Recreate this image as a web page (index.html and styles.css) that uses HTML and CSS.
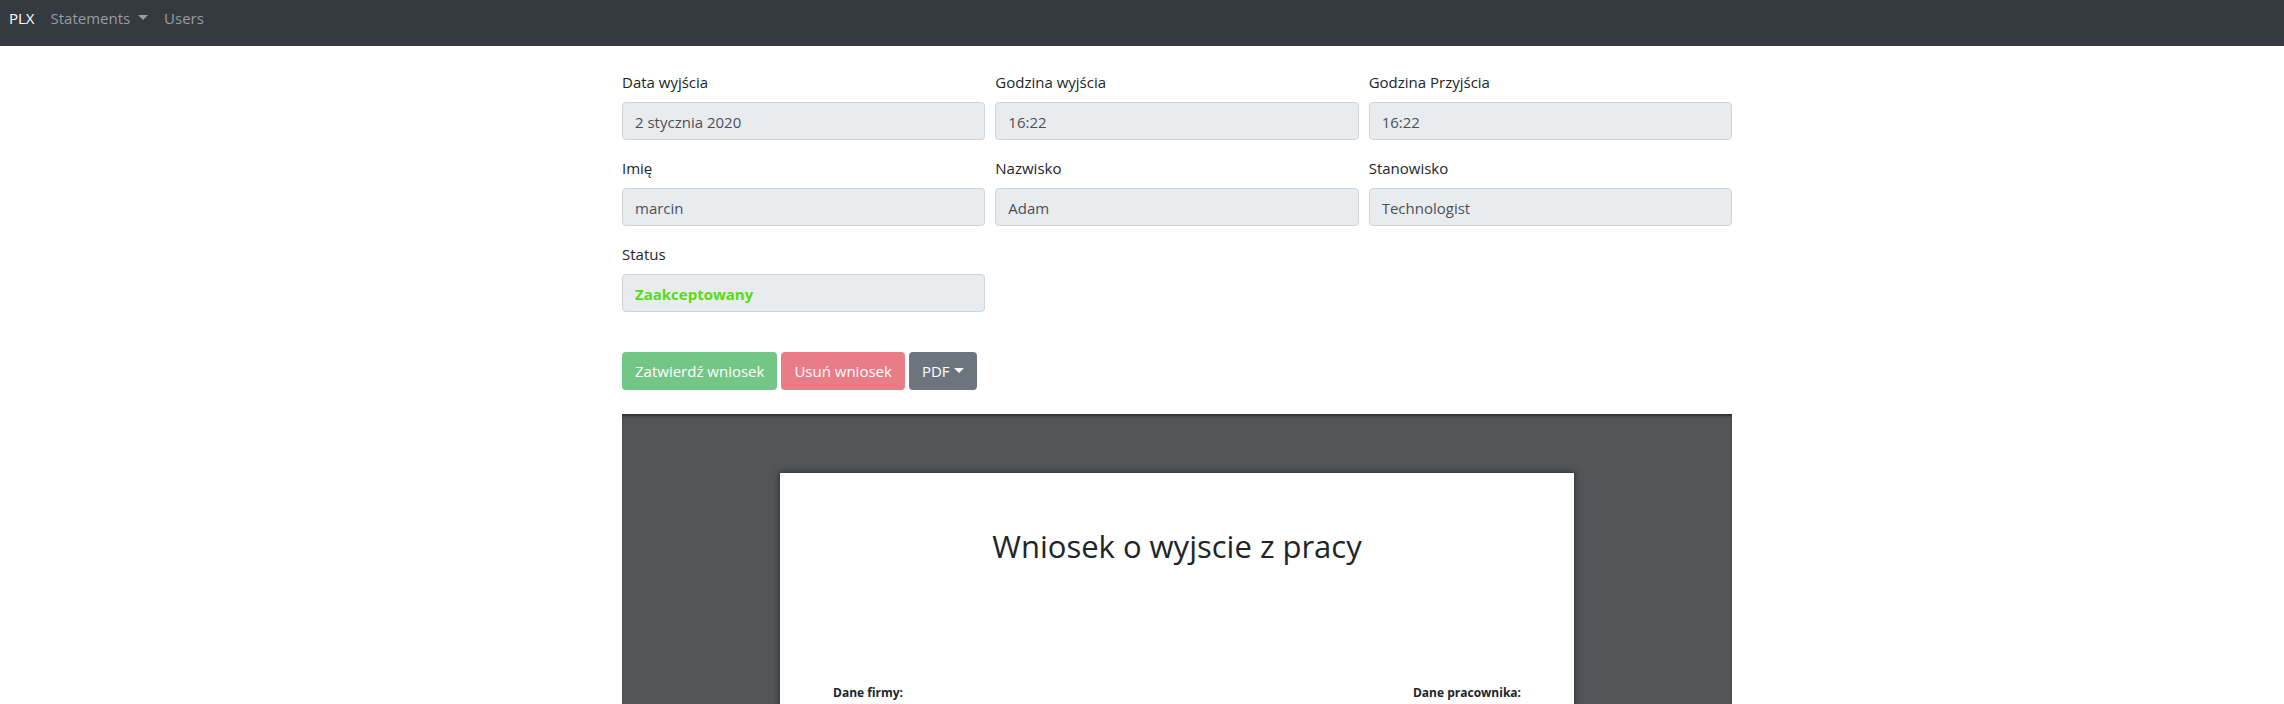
FILE: index.html
```html
<!DOCTYPE html>
<html lang="pl">
<head>
<meta charset="utf-8">
<meta name="viewport" content="width=device-width, initial-scale=1">
<title>PLX</title>
<link rel="stylesheet" href="styles.css">
</head>
<body>
<nav class="navbar">
  <a class="nav-link active" href="#">PLX</a>
  <a class="nav-link" href="#">Statements <span class="caret nav-caret"></span></a>
  <a class="nav-link" href="#">Users</a>
</nav>
<main class="content">
  <div class="container">
    <form class="fields">
      <div class="field">
        <label for="date">Data wyjścia</label>
        <input id="date" type="text" value="2 stycznia 2020" readonly>
      </div>
      <div class="field">
        <label for="leave">Godzina wyjścia</label>
        <input id="leave" type="text" value="16:22" readonly>
      </div>
      <div class="field">
        <label for="arrive">Godzina Przyjścia</label>
        <input id="arrive" type="text" value="16:22" readonly>
      </div>
      <div class="field">
        <label for="name">Imię</label>
        <input id="name" type="text" value="marcin" readonly>
      </div>
      <div class="field">
        <label for="surname">Nazwisko</label>
        <input id="surname" type="text" value="Adam" readonly>
      </div>
      <div class="field">
        <label for="position">Stanowisko</label>
        <input id="position" type="text" value="Technologist" readonly>
      </div>
      <div class="field">
        <label for="status">Status</label>
        <input id="status" class="accepted" type="text" value="Zaakceptowany" readonly>
      </div>
    </form>
    <div class="actions">
      <button class="btn success" type="button">Zatwierdź wniosek</button>
      <button class="btn danger" type="button">Usuń wniosek</button>
      <button class="btn secondary" type="button">PDF<span class="caret"></span></button>
    </div>
    <section class="viewer">
      <article class="sheet">
        <h1 class="sheet-title">Wniosek o wyjscie z pracy</h1>
        <div class="parties">
          <strong>Dane firmy:</strong>
          <strong>Dane pracownika:</strong>
        </div>
      </article>
    </section>
  </div>
</main>
</body>
</html>
```
FILE: styles.css
```css
* {
  box-sizing: border-box;
}

body {
  display: flex;
  flex-direction: column;
  height: 100vh;
  margin: 0;
  overflow: hidden;
  background: #fff;
  color: #212529;
  font-family: "Segoe UI", "Open Sans", "Noto Sans", sans-serif;
  font-size: 15px;
  line-height: 24px;
}

.navbar {
  display: flex;
  flex: none;
  gap: 16px;
  height: 46px;
  padding: 6px 9px;
  background: #343a40;
}

.nav-link {
  color: #9a9da0;
  text-decoration: none;
}

.nav-link.active {
  color: #fff;
}

.caret {
  display: inline-block;
  margin-left: 4px;
  border-top: 5px solid;
  border-right: 5px solid transparent;
  border-left: 5px solid transparent;
  vertical-align: 4px;
}

.content {
  display: flex;
  flex: 1;
  justify-content: center;
  min-height: 0;
  padding: 24px 0 0 70px;
}

.container {
  display: flex;
  flex-direction: column;
  width: 100%;
  max-width: 1110px;
}

.fields {
  display: grid;
  grid-template-columns: repeat(3, 1fr);
  gap: 16px 10px;
}

.field {
  display: flex;
  flex-direction: column;
  gap: 8px;
}

.field input {
  width: 100%;
  height: 38px;
  padding: 7px 12px 5px;
  border: 1px solid #ced4da;
  border-radius: 4px;
  background: #e9ecef;
  color: #495057;
  font: inherit;
}

.field .accepted {
  color: #55dd11;
  font-weight: 700;
}

.actions {
  display: flex;
  gap: 4px;
  padding: 40px 0 24px;
}

.btn {
  height: 38px;
  padding: 0 13px;
  border: 0;
  border-radius: 4px;
  color: #fff;
  font: inherit;
}

.success {
  background: #74c686;
}

.danger {
  background: #e87c87;
}

.secondary {
  background: #6c757d;
}

.viewer {
  display: flex;
  flex: 1;
  justify-content: center;
  min-height: 0;
  padding-top: 59px;
  overflow: hidden;
  background: #525659;
  box-shadow: inset 0 3px 3px -1px #2b2e31;
}

.sheet {
  width: 100%;
  max-width: 794px;
  height: 1122px;
  padding: 53px;
  background: #fff;
  box-shadow: 0 0 6px 1px #303234;
}

.sheet-title {
  margin: 0;
  font-size: 31px;
  font-weight: 400;
  line-height: 40px;
  text-align: center;
}

.parties {
  display: flex;
  justify-content: space-between;
  margin-top: 115px;
  font-size: 12px;
  line-height: 24px;
}
```
